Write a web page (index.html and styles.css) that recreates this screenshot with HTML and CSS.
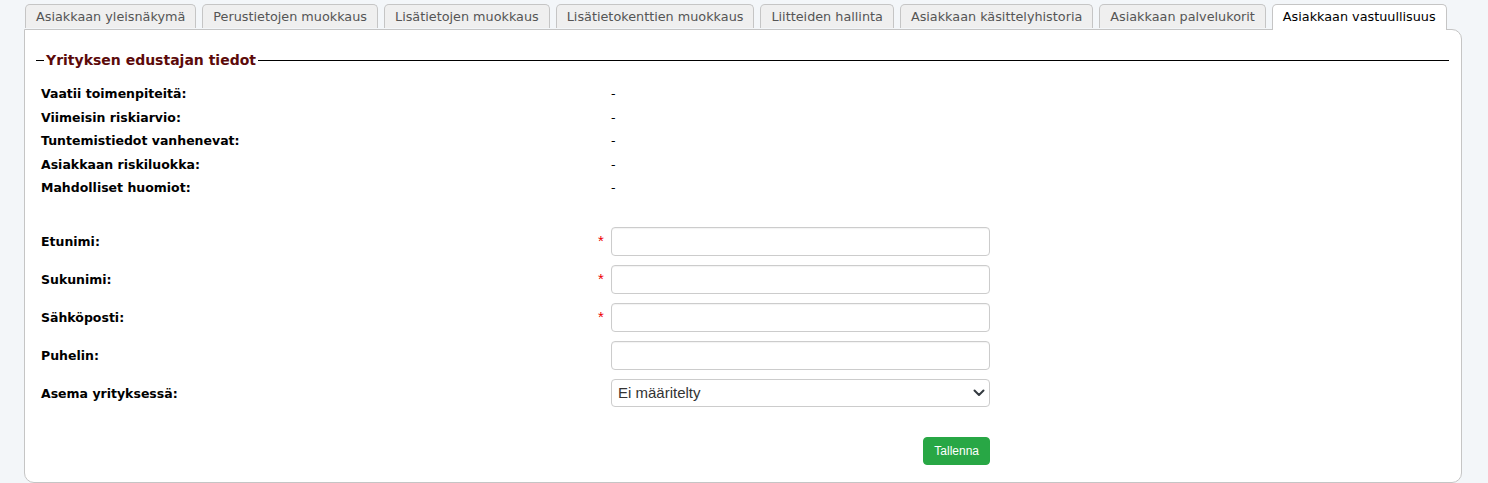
FILE: index.html
```html
<!DOCTYPE html>
<html lang="fi">
<head>
  <meta charset="UTF-8" />
  <title>Asiakkaan vastuullisuus</title>
  <link rel="stylesheet" href="styles.css">
</head>
<body>
  <div class="page">
    <ul class="tabs">
      <li class="tab">Asiakkaan yleisnäkymä</li>
      <li class="tab">Perustietojen muokkaus</li>
      <li class="tab">Lisätietojen muokkaus</li>
      <li class="tab">Lisätietokenttien muokkaus</li>
      <li class="tab">Liitteiden hallinta</li>
      <li class="tab">Asiakkaan käsittelyhistoria</li>
      <li class="tab">Asiakkaan palvelukorit</li>
      <li class="tab active">Asiakkaan vastuullisuus</li>
    </ul>

    <div class="panel">
      <fieldset class="group">
        <legend>Yrityksen edustajan tiedot</legend>

        <div class="info">
          <div class="info-label">Vaatii toimenpiteitä:</div><div class="info-value">-</div>
          <div class="info-label">Viimeisin riskiarvio:</div><div class="info-value">-</div>
          <div class="info-label">Tuntemistiedot vanhenevat:</div><div class="info-value">-</div>
          <div class="info-label">Asiakkaan riskiluokka:</div><div class="info-value">-</div>
          <div class="info-label">Mahdolliset huomiot:</div><div class="info-value">-</div>
        </div>

        <form class="form">
          <label class="form-label" for="etunimi">Etunimi:</label>
          <span class="req">*</span>
          <input class="field" type="text" id="etunimi" />

          <label class="form-label" for="sukunimi">Sukunimi:</label>
          <span class="req">*</span>
          <input class="field" type="text" id="sukunimi" />

          <label class="form-label" for="email">Sähköposti:</label>
          <span class="req">*</span>
          <input class="field" type="text" id="email" />

          <label class="form-label" for="puhelin">Puhelin:</label>
          <span class="req"></span>
          <input class="field" type="text" id="puhelin" />

          <label class="form-label" for="asema">Asema yrityksessä:</label>
          <span class="req"></span>
          <div class="select">
            <span>Ei määritelty</span>
            <svg width="12" height="8" viewBox="0 0 12 8"><path d="M1.5 1.5 L6 6 L10.5 1.5" fill="none" stroke="#343a40" stroke-width="2" stroke-linecap="round" stroke-linejoin="round"/></svg>
          </div>

          <div class="actions"><button type="button" class="btn-save">Tallenna</button></div>
        </form>
      </fieldset>
    </div>
  </div>
</body>
</html>
```

FILE: styles.css
```css
body {
  margin: 0;
  background: #f3f6f9;
  font-family: "DejaVu Sans", Verdana, sans-serif;
  color: #000;
}
.page {
  padding: 4px 0 0 24px;
  width: 1438px;
}
.tabs {
  list-style: none;
  margin: 0;
  padding: 0 0 0 1px;
  display: flex;
  gap: 6px;
  position: relative;
  z-index: 1;
}
.tab {
  flex: none;
  white-space: nowrap;
  height: 23px;
  line-height: 23px;
  padding: 0 10px;
  font-size: 12.8px;
  color: #555;
  background: #efefef;
  border: 1px solid #c5c5c5;
  border-bottom: none;
  border-radius: 5px 5px 0 0;
}
.tab.active {
  background: #fff;
  color: #000;
  height: 25px;
  margin-bottom: -1px;
}
.panel {
  background: #fff;
  border: 1px solid #c5c5c5;
  border-radius: 0 10px 10px 10px;
  height: 454px;
  padding: 21px 12px 0 11px;
  box-sizing: border-box;
}
.group {
  margin: 0;
  padding: 0 0 0 5px;
  border: none;
  border-top: 1px solid #000;
}
.group legend {
  margin-left: 3px;
  padding: 0 2px;
  font-size: 14px;
  font-weight: bold;
  color: #5c0a0a;
  line-height: 18px;
}
.info {
  display: grid;
  grid-template-columns: 570px auto;
  grid-auto-rows: 23.5px;
  align-items: center;
  margin-top: 13px;
  font-size: 12.5px;
}
.info-label { font-weight: bold; }
.form {
  display: grid;
  grid-template-columns: 556px 14px 379px;
  grid-template-rows: repeat(5, 29px) 48px;
  row-gap: 9px;
  align-items: center;
  margin-top: 27px;
}
.form-label {
  font-size: 12.5px;
  font-weight: bold;
}
.req {
  color: #e00;
  font-family: "Liberation Sans", Arial, sans-serif;
  font-size: 15px;
  align-self: start;
  padding: 5px 0 0 1px;
}
.field {
  box-sizing: border-box;
  height: 29px;
  width: 100%;
  margin: 0;
  border: 1px solid #ccc;
  border-radius: 4px;
  box-shadow: inset 0 1px 1px rgba(0, 0, 0, 0.05);
}
.select {
  box-sizing: border-box;
  height: 28px;
  display: flex;
  align-items: center;
  justify-content: space-between;
  padding: 0 4px 0 6px;
  border: 1px solid #ccc;
  border-radius: 4px;
  font-family: "Liberation Sans", Arial, sans-serif;
  font-size: 15px;
  color: #333;
  align-self: start;
}
.actions {
  grid-column: 3;
  display: flex;
  justify-content: flex-end;
  align-self: end;
}
.btn-save {
  height: 28px;
  padding: 0 10px;
  border: 1px solid #28a745;
  border-radius: 4px;
  background: #28a745;
  color: #fff;
  font-family: "Liberation Sans", Arial, sans-serif;
  font-size: 12px;
}
```
